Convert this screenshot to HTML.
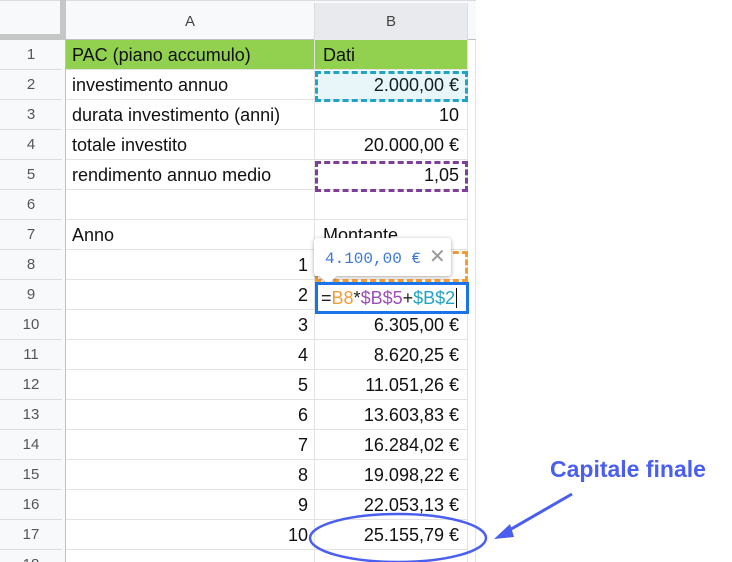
<!DOCTYPE html>
<html style="overflow:hidden"><head><style>
html,body{margin:0;width:732px;height:562px;overflow:hidden}
body{background:#fff;position:relative;font-family:"Liberation Sans",Roboto,sans-serif}
.a{position:absolute;box-sizing:border-box}
.rn{left:0;width:62px;text-align:center;font-size:15px;color:#555;background:#f8f9fa;border-bottom:1px solid #dadce0;}
.ca{left:66px;width:249px;border-bottom:1px solid #e2e2e2;border-right:1px solid #e2e2e2;font-size:18px;color:#111;padding:0 6px;}
.cb{left:315px;width:153px;border-bottom:1px solid #e2e2e2;border-right:1px solid #e2e2e2;font-size:18px;color:#111;padding:0 8px;text-align:right}
</style></head><body>
<div class="a" style="left:0;top:0;width:476px;height:40px;background:#f8f9fa;border-top:1px solid #dadce0;border-bottom:1px solid #c0c0c0"></div>
<div class="a" style="left:60px;top:0;width:6px;height:40px;background:#c4c7c5"></div>
<div class="a" style="left:0;top:34px;width:66px;height:6px;background:#c4c7c5"></div>
<div class="a" style="left:66px;top:3px;width:249px;height:37px;border-right:1px solid #dadce0;text-align:center;line-height:37px;font-size:15px;color:#444">A</div>
<div class="a" style="left:315px;top:3px;width:153px;height:37px;background:#e8eaed;border-right:1px solid #dadce0;text-align:center;line-height:37px;font-size:15px;color:#444">B</div>
<div class="a" style="left:60px;top:40px;width:6px;height:524px;background:#f8f9fa;border-right:1px solid #c0c0c0"></div>
<div class="a" style="left:468px;top:40px;width:8px;height:524px;border-right:1px solid #e2e2e2"></div>
<div id="g"></div>
<script>
var A=["PAC (piano accumulo)","investimento annuo","durata investimento (anni)","totale investito","rendimento annuo medio","","Anno","","","","","","","","","",""];
var B=["Dati","2.000,00 €","10","20.000,00 €","1,05","","Montante","","","6.305,00 €","8.620,25 €","11.051,26 €","13.603,83 €","16.284,02 €","19.098,22 €","22.053,13 €","25.155,79 €"];
var h="";
for(var i=0;i<18;i++){var t=40+i*30;
h+='<div class="a rn" style="top:'+t+'px;height:30px;line-height:30px">'+(i+1)+'</div>';
if(i<17){var ra=(i>=7)?'text-align:right;':'';var av=(i>=7)?(i-6):A[i];
var bg=i==0?'background:#92d050;':'';
h+='<div class="a ca" style="top:'+t+'px;height:30px;line-height:30px;'+ra+bg+'">'+av+'</div>';
h+='<div class="a cb" style="top:'+t+'px;height:30px;line-height:30px;'+bg+(i==0||i==6?'text-align:left;':'')+'">'+B[i]+'</div>';}
else{h+='<div class="a ca" style="top:'+t+'px;height:30px"></div><div class="a cb" style="top:'+t+'px;height:30px"></div>';}}
document.getElementById('g').innerHTML=h;
</script>
<div class="a" style="left:315px;top:71px;width:153px;height:31px;border:3px dashed #21a3c4;background:rgba(33,163,196,0.1)"></div>
<div class="a" style="left:315px;top:161px;width:153px;height:31px;border:3px dashed #7e3f98"></div>
<div class="a" style="left:315px;top:251px;width:153px;height:31px;border:3px dashed #f29c38"></div>
<div class="a" style="left:314px;top:238px;width:137px;height:38px;background:#fff;border-radius:3px;box-shadow:0 1px 4px rgba(0,0,0,.35);font-family:'Liberation Mono',monospace;font-size:16px;color:#3c78d8;line-height:38px;padding-left:11px">4.100,00 €<span style="color:#999;font-family:'Liberation Sans';font-size:20px;margin-left:8px">✕</span></div>
<div class="a" style="left:322px;top:270px;width:12px;height:12px;background:#fff;transform:rotate(45deg);box-shadow:2px 2px 2px rgba(0,0,0,.2)"></div>
<div class="a" style="left:315px;top:282px;width:154px;height:32px;border:3px solid #1a73e8;background:#fff;font-size:18px;line-height:26px;padding-left:3px;color:#222">=<span style="color:#f29c38">B8</span>*<span style="color:#9c4fb8">$B$5</span>+<span style="color:#21a3c4">$B$2</span><span style="border-left:1px solid #000;margin-left:1px"></span></div>
<svg class="a" style="left:0;top:0" width="732" height="562">
<ellipse cx="398" cy="538" rx="88" ry="24" fill="none" stroke="#4a5ff0" stroke-width="2.5"/>
<line x1="572" y1="494" x2="506" y2="532" stroke="#4a5ff0" stroke-width="3"/>
<polygon points="494,539 510,524 514,537" fill="#4a5ff0"/>
</svg>
<div class="a" style="left:550px;top:456px;font-size:23px;font-weight:bold;color:#4a5ff0">Capitale finale</div>
</body></html>
